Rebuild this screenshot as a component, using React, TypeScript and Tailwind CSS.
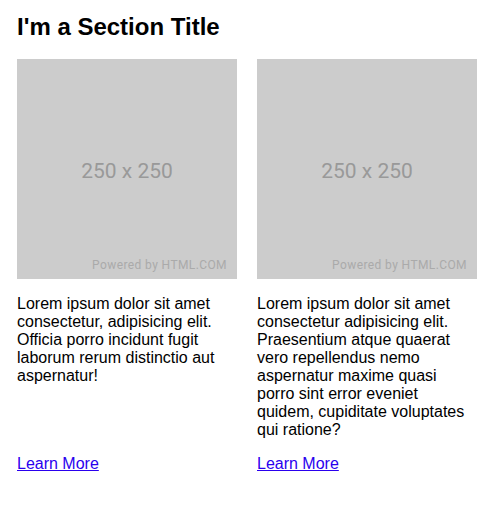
// Dependencies - React
import React from 'react';

// Data - Cards
const cards = [
    {
        text: 'Lorem ipsum dolor sit amet consectetur, adipisicing elit. Officia porro incidunt fugit laborum rerum distinctio aut aspernatur!',
    },
    {
        text: 'Lorem ipsum dolor sit amet consectetur adipisicing elit. Praesentium atque quaerat vero repellendus nemo aspernatur maxime quasi porro sint error eveniet quidem, cupiditate voluptates qui ratione?',
    },
];

// Component - Placeholder
function Placeholder() {
    return (
        <div className="relative flex h-[220px] w-[220px] items-center justify-center bg-[#cccccc]">
            <span className="mt-[6px] font-['Roboto',sans-serif] text-[21px] text-[#999999]">250 x 250</span>
            <span className="absolute bottom-[5px] right-[10px] font-['Roboto',sans-serif] text-[12px] tracking-[0.4px] text-[#aaaaaa]">
                Powered by HTML.COM
            </span>
        </div>
    );
}

// Component - App
export function App() {
    // Render the component
    return (
        <div className="min-h-[528px] bg-white px-[17px] pt-[13px] font-['Liberation_Sans',Arial,sans-serif] text-black">
            <h1 className="mb-[19px] text-[24px] font-bold leading-[27px]">I'm a Section Title</h1>

            <div className="flex gap-[20px]">
                {cards.map(function (card, index) {
                    return (
                        <div key={index} className="flex w-[220px] flex-col">
                            <Placeholder />
                            <p className="mb-4 mt-4 text-[16px] leading-[18px]">{card.text}</p>
                            <a href="#" className="mt-auto text-[16px] leading-[18px] text-[#2a00ee] underline">
                                Learn More
                            </a>
                        </div>
                    );
                })}
            </div>
        </div>
    );
}

// Export - Default
export default App;
